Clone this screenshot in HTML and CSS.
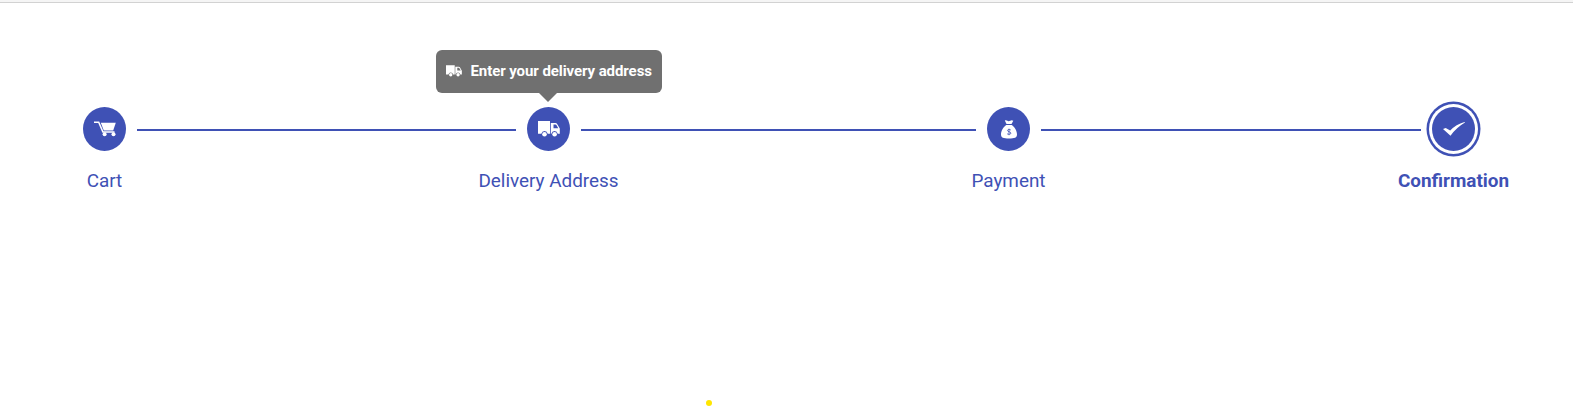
FILE: index.html
```html
<!DOCTYPE html>
<html lang="en">
<head>
<meta charset="utf-8">
<title>Checkout</title>
<link rel="stylesheet" href="styles.css">
</head>
<body>
<header class="topbar"></header>
<main class="page">
  <ol class="stepper">
    <li class="step">
      <span class="circle">
        <svg class="cart" width="22" height="16" viewBox="0 0 22 16"><path d="M0 1.200h4.700l4.200 9.700H20.500" fill="none" stroke="#fff" stroke-width="1.500"/><path d="M6.800 1.800H21.800L19.200 9.400H9.800z" fill="#fff"/><circle cx="10.600" cy="13.300" r="2" fill="#fff"/><circle cx="19.500" cy="13.300" r="2" fill="#fff"/></svg>
      </span>
      <span class="label">Cart</span>
    </li>
    <li class="line"></li>
    <li class="step">
      <span class="circle">
        <svg width="22" height="16" viewBox="0 0 22 16"><use href="#truck"/></svg>
      </span>
      <span class="label">Delivery Address</span>
      <span class="tooltip">
        <svg class="tip-icon" width="16" height="12" viewBox="0 0 22 16"><use href="#truck"/></svg>
        <span class="tip-text">Enter your delivery address</span>
      </span>
    </li>
    <li class="line"></li>
    <li class="step">
      <span class="circle">
        <svg width="16" height="19" viewBox="0 0 16 19"><path d="M3.800.5Q5.300.1 6.400.8T9.300.7Q10.800 0 12.300.8L10.500 4h-5zM5.300 5h5.400C13.500 7 16 10.600 16 14.500 16 17.600 13.500 18.500 8 18.500S0 17.600 0 14.500C0 10.600 2.500 7 5.300 5z" fill="#fff"/><path d="M9.800 10C8.900 9.300 6.500 9.200 6.500 10.600S9.900 11.500 9.900 13.100 7.200 14.500 6.100 13.800M8 8.700v6.500" fill="none" stroke="#3f51b5" stroke-width=".8"/></svg>
      </span>
      <span class="label">Payment</span>
    </li>
    <li class="line"></li>
    <li class="step">
      <span class="circle current">
        <svg width="22" height="14" viewBox="0 0 22 14"><path d="M0 6.900l2.700-1 4.500 2.600Q13 2.400 21.500 0L22 .6Q13.600 5.500 7.500 13.700z" fill="#fff"/></svg>
      </span>
      <span class="label bold">Confirmation</span>
    </li>
  </ol>
  <span class="dot"></span>
</main>
<svg class="defs" width="0" height="0"><defs><g id="truck" fill="currentColor"><path d="M0 0h12v12.700H9.700a3.200 3.200 0 0 0-6.300 0H0zM12.800 2h4.600Q18.600 2 19.300 3.200L21.800 7.600v5.100H19.700a3.200 3.200 0 0 0-6.300 0h-.6zM15.500 3.600v3.700h4.800L18.400 4.100Q18.100 3.600 17.500 3.600z" fill-rule="evenodd"/><circle cx="6.500" cy="13.200" r="2.300"/><circle cx="16.600" cy="13.200" r="2.300"/></g></defs></svg>
</body>
</html>
```
FILE: styles.css
```css
body {
  margin: 0;
  height: 407px;
  overflow: hidden;
  display: flex;
  flex-direction: column;
  background: #fff;
  font-family: Roboto, sans-serif;
}
.topbar {
  height: 2px;
  flex: none;
  background: #f5f5f5;
  border-bottom: 1px solid #d2d2d2;
}
.page {
  flex: 1;
  display: flex;
  flex-direction: column;
  justify-content: space-between;
  padding: 104px 87px 1px 72px;
}
.stepper {
  display: grid;
  grid-template-columns: 65px 379fr 65px 395fr 65px 380fr 65px;
  margin: 0;
  padding: 0;
  list-style: none;
}
.step {
  position: relative;
  display: flex;
  flex-direction: column;
  align-items: center;
}
.circle {
  display: flex;
  align-items: center;
  justify-content: center;
  width: 43px;
  height: 44px;
  border-radius: 50%;
  background: #3f51b5;
  color: #fff;
}
.current {
  box-shadow: 0 0 0 3px #fff, 0 0 0 5.5px #3f51b5;
}
.cart {
  margin-left: 1px;
}
.line {
  height: 2px;
  margin-top: 22px;
  background: #3f51b5;
}
.label {
  margin-top: 18px;
  color: #3f51b5;
  font-size: 18.9px;
  line-height: 24px;
  white-space: nowrap;
}
.bold {
  font-weight: 700;
}
.tooltip {
  position: absolute;
  bottom: 100.5px;
  left: 50%;
  transform: translateX(-50%);
  display: flex;
  align-items: center;
  gap: 9px;
  box-sizing: border-box;
  width: 226px;
  height: 43px;
  padding: 0 0 1px 10px;
  border-radius: 6px;
  background: #707070;
  color: #fff;
  font-size: 15px;
  font-weight: 700;
  letter-spacing: -0.08px;
  white-space: nowrap;
}
.tooltip::after {
  content: "";
  position: absolute;
  top: 100%;
  left: 50%;
  margin-left: -9.5px;
  border: 9px solid transparent;
  border-bottom: 0;
  border-top-color: #707070;
}
.dot {
  align-self: flex-start;
  width: 6px;
  height: 6px;
  margin-left: 634px;
  border-radius: 50%;
  background: #ffe600;
}
.defs {
  position: absolute;
}
```
